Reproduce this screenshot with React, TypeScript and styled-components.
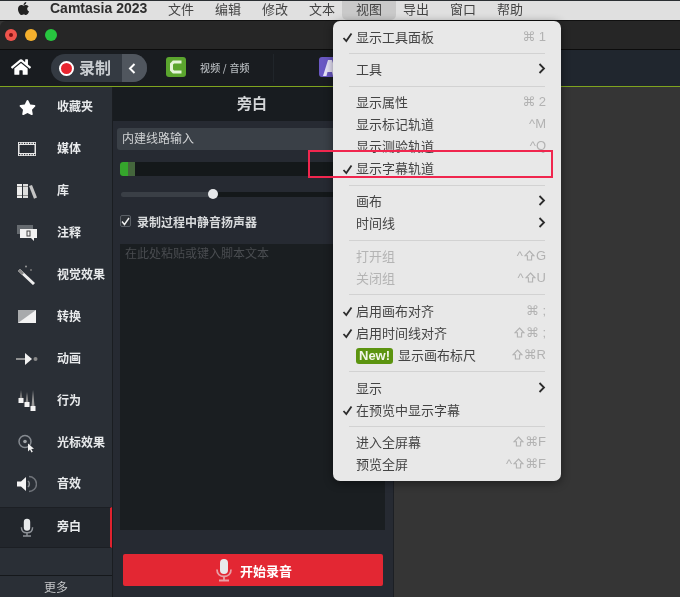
import React from "react";
import styled, { createGlobalStyle } from "styled-components";
import { FaApple, FaHome, FaStar } from "react-icons/fa";

const Global = createGlobalStyle`
  html, body { margin: 0; padding: 0; background: #333; }
  * { box-sizing: border-box; }
  body { font-family: "Noto Sans CJK SC", "Liberation Sans", sans-serif; }
`;

const Page = styled.div`
  position: relative;
  width: 680px;
  height: 597px;
  overflow: hidden;
  display: flex;
  flex-direction: column;
  background: #353535;
  filter: blur(0.35px);
`;

const MenuBar = styled.div`
  height: 21px;
  flex: none;
  display: flex;
  align-items: flex-start;
  padding: 0 0 0 16px;
  background: #e0e0e0;
  border-top: 1px solid #2b2f33;
  border-bottom: 1px solid #101010;
  font-size: 13px;
  color: #444;
`;

const AppleMark = styled.span`
  display: flex;
  width: 34px;
  color: #222;
  font-size: 15px;
`;

const AppName = styled.span`
  font-family: "Liberation Sans", sans-serif;
  font-weight: 700;
  font-size: 14px;
  line-height: 14px;
  color: #2e2e2e;
  width: 118px;
  white-space: nowrap;
`;

const BarItem = styled.span<{ $open?: boolean }>`
  width: 47px;
  height: 19px;
  white-space: nowrap;
  ${(p) =>
    p.$open &&
    `
    position: relative;
    &::before {
      content: "";
      position: absolute;
      left: -14px; right: 7px; top: 0; bottom: 0;
      background: #c9c9c9;
      border-radius: 0 0 5px 5px;
    }
  `}
`;

const BarLabel = styled.span`
  display: block;
  position: relative;
  line-height: 15px;
`;

const TitleBar = styled.div`
  height: 29px;
  flex: none;
  display: flex;
  align-items: center;
  gap: 8px;
  padding-left: 5px;
  background: #262626;
  border-bottom: 1px solid #0c0c0c;
  border-top-left-radius: 6px;
`;

const Light = styled.span<{ $c: string }>`
  width: 12px;
  height: 12px;
  border-radius: 50%;
  background: ${(p) => p.$c};
  display: flex;
  align-items: center;
  justify-content: center;
`;

const LightDot = styled.span`
  width: 4px;
  height: 4px;
  border-radius: 50%;
  background: #7c1010;
`;

const Toolbar = styled.div`
  height: 37px;
  flex: none;
  display: flex;
  align-items: center;
  background: linear-gradient(90deg, #191c20 0%, #191c20 50%, #20262e 80%);
  border-bottom: 1px solid #7fa41f;
`;

const HomeBtn = styled.div`
  width: 51px;
  display: flex;
  padding: 0 0 2px 11px;
  color: #fff;
  font-size: 20px;
`;

const Pill = styled.div`
  width: 96px;
  height: 28px;
  border-radius: 14px;
  overflow: hidden;
  display: flex;
  background: #343a42;
`;

const RecPart = styled.div`
  width: 71px;
  display: flex;
  align-items: center;
  gap: 5px;
  padding-left: 8px;
  font-size: 16px;
  font-weight: 700;
  color: #c8ccd0;
  white-space: nowrap;
`;

const RecLabel = styled.span`
  line-height: 20px;
  margin-top: -3px;
`;

const RecDot = styled.span`
  flex: none;
  width: 15px;
  height: 15px;
  border-radius: 50%;
  background: #e8252f;
  border: 2px solid #fff;
`;

const ChevronPart = styled.div`
  flex: 1;
  background: #50565e;
  display: flex;
  align-items: center;
  padding-left: 6px;
`;

const ToolGroup = styled.div<{ $w: number }>`
  width: ${(p) => p.$w}px;
  height: 28px;
  display: flex;
  align-items: center;
  gap: 14px;
  padding: 0 0 2px 19px;
  border-right: 1px solid #20252a;
  font-size: 10px;
  font-weight: 500;
  letter-spacing: 0.2px;
  color: #b4b8bc;
  white-space: nowrap;
`;

const Main = styled.div`
  flex: 1;
  display: flex;
  min-height: 0;
`;

const Sidebar = styled.div`
  width: 113px;
  flex: none;
  display: flex;
  flex-direction: column;
  background: #2a2f36;
  border-right: 1px solid #1a1d21;
`;

const NavItem = styled.div<{ $active?: boolean }>`
  height: 41.9px;
  flex: none;
  display: flex;
  align-items: center;
  padding-bottom: 4px;
  font-size: 12px;
  font-weight: 700;
  color: #e8eaec;
  white-space: nowrap;
  ${(p) =>
    p.$active &&
    `
    height: 41px;
    margin-top: 1px;
    padding-bottom: 3px;
    background: #22262c;
    border-top: 1px solid #1c1f24;
    border-bottom: 1px solid #1c1f24;
    border-right: 2px solid #e0222f;
  `}
`;

const NavIcon = styled.span`
  width: 57px;
  display: flex;
  justify-content: center;
  padding: 3px 3px 0 0;
  color: #fff;
`;

const More = styled.div`
  margin-top: auto;
  height: 22px;
  flex: none;
  border-top: 1px solid #15181b;
  text-align: center;
  font-size: 12px;
  line-height: 21px;
  color: #c4c6c8;
`;

const Panel = styled.div`
  width: 281px;
  flex: none;
  display: flex;
  flex-direction: column;
  background: #262a32;
  border-right: 1px solid #1c1f24;
`;

const PanelTitle = styled.div`
  height: 34px;
  flex: none;
  background: #181c20;
  display: flex;
  align-items: center;
  justify-content: center;
  padding: 0 2px 4px 0;
  font-size: 15px;
  font-weight: 700;
  color: #d4d6d8;
`;

const PanelBody = styled.div`
  flex: 1;
  display: flex;
  flex-direction: column;
  padding: 7px 8px 11px 4px;
`;

const Select = styled.div`
  height: 22px;
  flex: none;
  background: #3a4047;
  border-radius: 3px;
  padding-left: 5px;
  font-size: 12px;
  line-height: 20px;
  color: #d0d2d4;
`;

const Meter = styled.div`
  height: 14px;
  flex: none;
  margin: 12px 0 0 3px;
  border-radius: 3px;
  overflow: hidden;
  display: flex;
  background: #14181a;
`;

const MeterFill = styled.span<{ $w: number; $c: string }>`
  width: ${(p) => p.$w}px;
  background: ${(p) => p.$c};
`;

const SliderTrack = styled.div`
  position: relative;
  height: 5px;
  flex: none;
  margin: 16px 0 0 4px;
  border-radius: 3px;
  background: linear-gradient(90deg, #3a3f46 0, #3a3f46 92px, #14181a 92px);
`;

const SliderThumb = styled.span`
  position: absolute;
  left: 87px;
  top: -3px;
  width: 10px;
  height: 10px;
  border-radius: 50%;
  background: #e6e8ea;
`;

const CheckRow = styled.div`
  display: flex;
  align-items: center;
  gap: 6px;
  margin: 15px 0 0 3px;
  height: 18px;
  flex: none;
  font-size: 12px;
  font-weight: 700;
  color: #d8dadc;
`;

const CheckBox = styled.span`
  width: 11px;
  height: 12px;
  border: 1px solid #5a5f66;
  border-radius: 2px;
  background: #2c3036;
  display: flex;
  align-items: center;
  justify-content: center;
`;

const ScriptBox = styled.div`
  height: 286px;
  flex: none;
  margin: 14px 0 0 3px;
  padding: 0 5px;
  background: #1a1e21;
  font-size: 12px;
  line-height: 17px;
  color: #494c50;
`;

const RecordBtn = styled.div`
  height: 32px;
  flex: none;
  margin: 24px 2px 0 6px;
  border-radius: 2px;
  background: #e32733;
  display: flex;
  align-items: center;
  justify-content: center;
  gap: 6px;
  font-size: 13px;
  font-weight: 700;
  color: #fff;
`;

const Stage = styled.div`
  flex: 1;
  background: #353535;
`;

const DropMenu = styled.div`
  position: absolute;
  left: 333px;
  top: 21px;
  width: 228px;
  padding: 5px 0;
  background: #e8e8e8;
  border-radius: 7px;
  box-shadow: 0 2px 10px rgba(0, 0, 0, 0.45);
  font-size: 13px;
`;

const Row = styled.div<{ $off?: boolean }>`
  position: relative;
  height: 22px;
  display: flex;
  align-items: center;
  justify-content: space-between;
  padding: 0 15px 2px 23px;
  white-space: nowrap;
  color: ${(p) => (p.$off ? "#b4b4b4" : "#444")};
`;

const RowLabel = styled.span`
  display: flex;
  align-items: center;
  gap: 5px;
`;

const Check = styled.span`
  position: absolute;
  left: 9px;
  top: 6px;
  display: flex;
  color: #2c2c2c;
`;

const Shortcut = styled.span`
  display: flex;
  align-items: center;
  gap: 1px;
  font-family: "Liberation Sans", "DejaVu Sans", sans-serif;
  font-size: 13px;
  color: #b2b2b2;
`;

const ShiftGlyph = styled.svg`
  display: block;
`;

const Arrow = styled.span`
  display: flex;
  color: #2c2c2c;
`;

const Sep = styled.div`
  height: 1px;
  margin: 5px 16px 4.85px 16px;
  background: #d2d2d2;
`;

const NewBadge = styled.span`
  font-family: "Liberation Sans", sans-serif;
  font-weight: 700;
  font-size: 13px;
  line-height: 16px;
  height: 16px;
  margin-top: 3px;
  padding: 0 3px;
  border-radius: 3px;
  background: #5c9410;
  color: #f2f6e8;
`;

const Highlight = styled.div`
  position: absolute;
  left: 308px;
  top: 150px;
  width: 245px;
  height: 28px;
  border: 2px solid #f0264e;
  pointer-events: none;
`;

const Mic = ({ size = 20, body = "#e8eaec", stand = "#9a9ea4" }) => (
  <svg width={size} height={size * 1.2} viewBox="0 0 20 24" fill="none">
    <rect x="6" y="1" width="8" height="15" rx="4" fill={body} />
    <path d="M3 11.500c0 4.500 3 7 7 7s7-2.500 7-7" stroke={stand} strokeWidth="1.800" />
    <path d="M10 18.500V22M5 22.500h10" stroke={stand} strokeWidth="1.800" />
  </svg>
);

const icons: Record<string, React.ReactNode> = {
  star: <FaStar size={17} />,
  film: (
    <svg width="18" height="14" viewBox="0 0 18 14">
      <rect x="0" y="0" width="18" height="14" fill="#e8e8e8" />
      <rect x="1.500" y="3" width="15" height="8" fill="#2a2f36" />
      {[1, 3.500, 6, 8.500, 11, 13.500, 16].map((x) => (
        <g key={x}>
          <rect x={x} y="0.800" width="1.200" height="1.200" fill="#2a2f36" />
          <rect x={x} y="12" width="1.200" height="1.200" fill="#2a2f36" />
        </g>
      ))}
    </svg>
  ),
  books: (
    <svg width="20" height="16" viewBox="0 0 20 16">
      <rect x="0" y="1" width="5" height="14" fill="#eee" />
      <rect x="0" y="3" width="5" height="1" fill="#888" />
      <rect x="0" y="12" width="5" height="1" fill="#888" />
      <rect x="6" y="1" width="5" height="14" fill="#ddd" />
      <rect x="6" y="3" width="5" height="1" fill="#888" />
      <rect x="6" y="12" width="5" height="1" fill="#888" />
      <path d="M12 3l3-1 5 12.500-3 1.200z" fill="#c4c4c4" />
    </svg>
  ),
  note: (
    <svg width="20" height="17" viewBox="0 0 20 17">
      <rect x="0" y="0" width="16" height="9" fill="#666b70" />
      <path d="M3 4h17v9h-3v3l-3-3H3z" fill="#f2f2f2" />
      <rect x="10" y="6" width="3" height="5" fill="none" stroke="#444" strokeWidth="1" />
    </svg>
  ),
  wand: (
    <svg width="18" height="20" viewBox="0 0 18 20">
      <path d="M1 5l15 14" stroke="#eee" strokeWidth="3" />
      <path d="M1 5l4 4" stroke="#888" strokeWidth="3" />
      <circle cx="8" cy="1.500" r="1" fill="#999" />
      <circle cx="13" cy="5" r="1" fill="#777" />
    </svg>
  ),
  trans: (
    <svg width="18" height="13" viewBox="0 0 18 13">
      <rect width="18" height="13" fill="#f2f2f2" />
      <path d="M0 0h18L0 13z" fill="#a8aaac" />
    </svg>
  ),
  anim: (
    <svg width="22" height="12" viewBox="0 0 22 12">
      <path d="M0 5.200h10V6.800H0z" fill="#aaa" />
      <path d="M9 0l7 6-7 6z" fill="#f2f2f2" />
      <circle cx="19.500" cy="6" r="2" fill="#888" />
    </svg>
  ),
  behave: (
    <svg width="18" height="22" viewBox="0 0 18 22">
      <path d="M3 0l1.500 9h-3z" fill="#777" />
      <path d="M9 2l1.500 11h-3z" fill="#888" />
      <path d="M15 0l1.500 16h-3z" fill="#999" />
      <rect x="0.500" y="8" width="5" height="5" fill="#f4f4f4" />
      <rect x="6.500" y="12" width="5" height="5" fill="#f4f4f4" />
      <rect x="12.500" y="16" width="5" height="5" fill="#f4f4f4" />
    </svg>
  ),
  cursor: (
    <svg width="20" height="23" viewBox="0 -3 20 23" fill="none">
      <circle cx="8" cy="7.500" r="6" stroke="#858a90" strokeWidth="1.500" />
      <circle cx="8" cy="7.500" r="1.800" fill="#a0a4a8" />
      <path d="M11 9.500l0 8 2-2 1.500 3 1.300-.7-1.500-2.800 2.700-.3z" fill="#f0f0f0" />
    </svg>
  ),
  sound: (
    <svg width="20" height="20" viewBox="0 0 20 20" fill="none">
      <path d="M0 7.500h4L9 3v14l-5-4.500H0z" fill="#f4f4f4" />
      <path d="M11 7a4 4 0 0 1 0 6" stroke="#8a8e92" strokeWidth="1.500" />
      <path d="M12 2.500a7.500 7.500 0 0 1 0 15" stroke="#70747a" strokeWidth="1.500" />
    </svg>
  ),
  mic: <Mic size={16} stand="#8e9298" />,
};

const navItems = [
  ["star", "收藏夹"],
  ["film", "媒体"],
  ["books", "库"],
  ["note", "注释"],
  ["wand", "视觉效果"],
  ["trans", "转换"],
  ["anim", "动画"],
  ["behave", "行为"],
  ["cursor", "光标效果"],
  ["sound", "音效"],
  ["mic", "旁白"],
];

type Entry =
  | "sep"
  | { t: string; k?: string; checked?: boolean; sub?: boolean; off?: boolean; badge?: boolean };

const menu: Entry[] = [
  { t: "显示工具面板", k: "⌘ 1", checked: true },
  "sep",
  { t: "工具", sub: true },
  "sep",
  { t: "显示属性", k: "⌘ 2" },
  { t: "显示标记轨道", k: "^M" },
  { t: "显示测验轨道", k: "^Q" },
  { t: "显示字幕轨道", checked: true },
  "sep",
  { t: "画布", sub: true },
  { t: "时间线", sub: true },
  "sep",
  { t: "打开组", k: "^⇧G", off: true },
  { t: "关闭组", k: "^⇧U", off: true },
  "sep",
  { t: "启用画布对齐", k: "⌘ ;", checked: true },
  { t: "启用时间线对齐", k: "⇧⌘ ;", checked: true },
  { t: "显示画布标尺", k: "⇧⌘R", badge: true },
  "sep",
  { t: "显示", sub: true },
  { t: "在预览中显示字幕", checked: true },
  "sep",
  { t: "进入全屏幕", k: "⇧⌘F" },
  { t: "预览全屏", k: "^⇧⌘F" },
];

const Tick = () => (
  <svg width="11" height="11" viewBox="0 0 11 11" fill="none">
    <path d="M1.500 6l2.800 3L9.500 1.500" stroke="currentColor" strokeWidth="1.800" />
  </svg>
);

const Keys = ({ k }: { k: string }) => (
  <Shortcut>
    {k.split("⇧").map((part, i) => (
      <React.Fragment key={i}>
        {i > 0 && (
          <ShiftGlyph width="11" height="11" viewBox="0 0 11 11" fill="none">
            <path d="M5.500 1L10 5.800H7.600V10H3.400V5.800H1z" stroke="currentColor" strokeWidth="1.100" />
          </ShiftGlyph>
        )}
        {part && <span>{part}</span>}
      </React.Fragment>
    ))}
  </Shortcut>
);

export default function App() {
  return (
    <Page>
      <Global />
      <MenuBar>
        <AppleMark>
          <FaApple />
        </AppleMark>
        <AppName>Camtasia 2023</AppName>
        {["文件", "编辑", "修改", "文本"].map((m) => (
          <BarItem key={m}>
            <BarLabel>{m}</BarLabel>
          </BarItem>
        ))}
        <BarItem $open>
          <BarLabel>视图</BarLabel>
        </BarItem>
        {["导出", "窗口", "帮助"].map((m) => (
          <BarItem key={m}>
            <BarLabel>{m}</BarLabel>
          </BarItem>
        ))}
      </MenuBar>
      <TitleBar>
        <Light $c="#f0544c">
          <LightDot />
        </Light>
        <Light $c="#f5b02d" />
        <Light $c="#27c63f" />
      </TitleBar>
      <Toolbar>
        <HomeBtn>
          <FaHome />
        </HomeBtn>
        <Pill>
          <RecPart>
            <RecDot />
            <RecLabel>录制</RecLabel>
          </RecPart>
          <ChevronPart>
            <svg width="8" height="11" viewBox="0 0 8 11" fill="none">
              <path d="M6.500 1L2 5.500 6.500 10" stroke="#fff" strokeWidth="2" />
            </svg>
          </ChevronPart>
        </Pill>
        <ToolGroup $w={127}>
          <svg width="20" height="20" viewBox="0 0 20 20">
            <rect width="20" height="20" rx="3" fill="#5ba52e" />
            <path d="M15.500 5H7.500L5.500 7v6l2 2h8" fill="none" stroke="#e4f4d8" strokeWidth="3" />
          </svg>
          视频 / 音频
        </ToolGroup>
        <ToolGroup $w={80}>
          <svg width="20" height="20" viewBox="0 0 20 20" style={{ marginLeft: 26 }}>
            <rect width="20" height="20" rx="3" fill="#6a58c4" />
            <path d="M4 19L9 3h4l5 16h-4l-1-4H8.500l-1 4z" fill="#e8e4f8" />
          </svg>
        </ToolGroup>
      </Toolbar>
      <Main>
        <Sidebar>
          {navItems.map(([icon, label]) => (
            <NavItem key={label} $active={label === "旁白"}>
              <NavIcon>{icons[icon]}</NavIcon>
              {label}
            </NavItem>
          ))}
          <More>更多</More>
        </Sidebar>
        <Panel>
          <PanelTitle>旁白</PanelTitle>
          <PanelBody>
            <Select>内建线路输入</Select>
            <Meter>
              <MeterFill $w={8} $c="#35a62c" />
              <MeterFill $w={7} $c="#44663c" />
            </Meter>
            <SliderTrack>
              <SliderThumb />
            </SliderTrack>
            <CheckRow>
              <CheckBox>
                <svg width="9" height="9" viewBox="0 0 9 9" fill="none">
                  <path d="M1 4.500l2.500 3L8 1" stroke="#f0f0f0" strokeWidth="1.400" />
                </svg>
              </CheckBox>
              录制过程中静音扬声器
            </CheckRow>
            <ScriptBox>在此处粘贴或键入脚本文本</ScriptBox>
            <RecordBtn>
              <Mic size={20} stand="#e8a0a6" />
              开始录音
            </RecordBtn>
          </PanelBody>
        </Panel>
        <Stage />
      </Main>
      <DropMenu>
        {menu.map((e, i) =>
          e === "sep" ? (
            <Sep key={i} />
          ) : (
            <Row key={i} $off={e.off}>
              {e.checked && (
                <Check>
                  <Tick />
                </Check>
              )}
              <RowLabel>
                {e.badge && <NewBadge>New!</NewBadge>}
                {e.t}
              </RowLabel>
              {e.k && <Keys k={e.k} />}
              {e.sub && (
                <Arrow>
                  <svg width="8" height="11" viewBox="0 0 8 11" fill="none">
                    <path d="M1.500 1L6 5.500 1.500 10" stroke="currentColor" strokeWidth="1.800" />
                  </svg>
                </Arrow>
              )}
            </Row>
          )
        )}
      </DropMenu>
      <Highlight />
    </Page>
  );
}
